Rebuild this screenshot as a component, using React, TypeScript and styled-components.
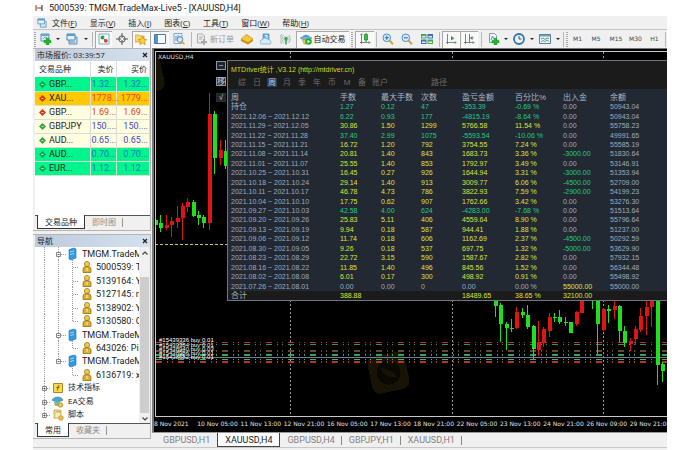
import React from "react";
import styled, { createGlobalStyle } from "styled-components";

const ui = '"Open Sans", "Noto Sans CJK SC", sans-serif';
const caption = 'Roboto, "Noto Sans CJK SC", sans-serif';
const figures = '"Liberation Sans", "Noto Sans CJK SC", sans-serif';

const Global = createGlobalStyle`
  *, *::before { box-sizing: border-box; }
  body { margin: 0; background: #fff; }
  button { font: inherit; color: inherit; background: none; border: 0; padding: 0; margin: 0; }
  h1, h2, ul { margin: 0; padding: 0; font: inherit; list-style: none; }
`;

const Window = styled.main`
  display: flex;
  flex-direction: column;
  height: 100vh;
  margin: 0 33px;
  overflow: hidden;
  background: #f0f0f0;
  font: 9px/12px ${ui};
  color: #222;
`;

const TitleBar = styled.header`
  display: flex;
  align-items: center;
  gap: 6px;
  height: 16px;
  padding-left: 2px;
  background: #fff;
  font-family: ${caption};
  h1 { white-space: nowrap; }
`;

const MenuBar = styled.nav`
  display: flex;
  align-items: center;
  gap: 13px;
  height: 13px;
  padding-left: 4px;
  font-size: 8px;
  svg { margin-right: -8px; }
  button { white-space: nowrap; }
`;

const Toolbar = styled.div`
  display: flex;
  align-items: center;
  height: 19px;
  border-top: 1px solid #c4c4c4;
  overflow: hidden;
`;

const Tool = styled.button<{ $w: number; $on?: boolean; $dim?: boolean }>`
  display: flex;
  align-items: center;
  justify-content: center;
  flex: 0 0 ${(p) => p.$w}px;
  height: 17px;
  font-size: 8px;
  white-space: nowrap;
  gap: 2px;
  color: ${(p) => (p.$dim ? "#9a9a9a" : "#222")};
  ${(p) => p.$on && "background:#f8f8f8;box-shadow:inset 1px 1px #a8a8a8, inset -1px -1px #fff;"}
`;

const Period = styled(Tool)`
  font: 6px/10px "DejaVu Sans", sans-serif;
  color: #444;
`;

const Caret = styled.button`
  flex: 0 0 6px;
  height: 17px;
  &::before {
    content: "";
    display: block;
    margin: 0 auto;
    width: 4px;
    border: 2px solid transparent;
    border-top-color: #222;
    border-bottom: 0;
  }
`;

const Sep = styled.i<{ $w: number }>`
  flex: 0 0 ${(p) => p.$w}px;
  height: 15px;
  background: linear-gradient(#b8b8b8, #b8b8b8) center / 1px 100% no-repeat;
`;

const Grip = styled.i<{ $w: number }>`
  flex: 0 0 ${(p) => p.$w}px;
  height: 15px;
  background: repeating-linear-gradient(#aaa 0 1px, transparent 1px 2px) center / 2px 100% no-repeat;
`;

const Body = styled.div`
  display: flex;
  flex: 1;
  min-height: 0;
`;

const Side = styled.aside`
  display: flex;
  flex-direction: column;
  flex: 0 0 118px;
  min-width: 0;
  gap: 3px;
  padding-bottom: 8px;
`;

const Dock = styled.section<{ $grow?: boolean }>`
  display: flex;
  flex-direction: column;
  min-width: 0;
  ${(p) => (p.$grow ? "flex:1;min-height:0;" : "flex:0 0 183px;")}
  border: solid #b4b4b4;
  border-width: 1px 1px 1px 0;
  padding-left: 2px;
`;

const DockTitle = styled.header`
  display: flex;
  align-items: center;
  justify-content: space-between;
  height: 12px;
  padding: 0 2px;
  background: linear-gradient(90deg, #bccbdc, #d6e1ee);
  font-size: 8px;
  h2 { white-space: nowrap; }
  svg { display: block; }
`;

const DockBody = styled.div`
  flex: 1;
  min-height: 0;
  display: flex;
  background: #fff;
  overflow: hidden;
`;

const DockTabs = styled.div`
  display: flex;
  height: 15px;
  padding-left: 2px;
  border-top: 1px solid #555;
  font-size: 8px;
`;

const DockTab = styled.button<{ $on?: boolean }>`
  padding: 0 7px;
  margin-top: -1px;
  height: 14px;
  white-space: nowrap;
  ${(p) =>
    p.$on
      ? "background:#fff;border:solid #333;border-width:0 1px 1px;color:#222;"
      : "color:#8c8c8c;background:linear-gradient(#999,#999) right / 1px 9px no-repeat;"}
`;

const Quotes = styled.table`
  width: 100%;
  align-self: flex-start;
  table-layout: fixed;
  border-collapse: collapse;
  th {
    height: 16px;
    padding: 0 2px 0 4px;
    font: 8px/12px ${ui};
    text-align: right;
    border-right: 1px solid #ddd;
    white-space: nowrap;
  }
  th:first-child { width: 55px; text-align: left; }
  td {
    height: 14px;
    padding: 0 1px;
    text-align: right;
    border: solid #d9dfd0;
    border-width: 0 1px 1px 0;
    white-space: nowrap;
    font-family: ${caption};
  }
  th:nth-child(2) { width: 26px; padding-left: 0; }
  td:first-child { text-align: left; color: #222; padding-left: 4px; }
  svg { vertical-align: -1px; margin-right: 3px; }
`;

const QuoteRow = styled.tr<{ $bg: string; $fg: string }>`
  background: ${(p) => p.$bg};
  color: ${(p) => p.$fg};
`;

const Tree = styled.ul`
  flex: 1;
  min-width: 0;
  display: flex;
  flex-direction: column;
  height: 175px;
  padding-left: 3px;
  overflow: hidden;
`;

const Branch = styled.li<{ $root?: boolean }>`
  flex: 1;
  min-height: 0;
  display: flex;
  align-items: center;
  gap: 4px;
  white-space: nowrap;
  font-size: ${(p) => (p.$root ? 8 : 9)}px;
  font-family: ${caption};
  svg { flex: none; }
`;

const Scroll = styled.div`
  flex: 0 0 11px;
  display: flex;
  flex-direction: column;
  align-items: center;
  justify-content: space-between;
  padding: 4px 0 2px;
  background: #f0f0f0;
`;

const Thumb = styled.div`
  width: 9px;
  height: 136px;
  margin-top: 18px;
  background: #cdcdcd;
`;

const Main = styled.section`
  flex: 1;
  min-width: 0;
  display: flex;
  flex-direction: column;
  padding-left: 1px;
`;

const Chart = styled.div`
  position: relative;
  flex: 1;
  min-height: 0;
  display: flex;
  flex-direction: column;
  border-left: 2px solid #777;
  border-top: 1px solid #777;
  background: #000;
  overflow: hidden;
`;

const Plot = styled.div`
  flex: 1;
  min-height: 0;
  margin: 2px 0 0 1px;
  border: solid #c8c8c8;
  border-width: 1px 0 1px 1px;
  overflow: hidden;
  svg { display: block; width: 100%; height: 100%; }
`;

const Dates = styled.div`
  display: grid;
  grid-template-columns: repeat(12, 1fr);
  height: 15px;
  margin-right: -6px;
  padding-top: 1px;
  color: #e4e4e4;
  font: 6px/11px "DejaVu Sans", sans-serif;
  span { white-space: nowrap; }
`;

const Symbol = styled.div`
  position: absolute;
  left: 4px;
  top: 3px;
  color: #ddd;
  font: 6px/9px "DejaVu Sans", sans-serif;
`;

const PanelKeys = styled.div`
  position: absolute;
  left: 62px;
  top: 12px;
  display: flex;
  flex-direction: column;
  gap: 7px;
`;

const Key = styled.button<{ $lit?: boolean }>`
  width: 10px;
  height: 9px;
  border: 1px solid ${(p) => (p.$lit ? "#8d96a8" : "#2a2a2a")};
  background: #20242c;
  color: #c8cedb;
  font: 8px/7px ${figures};
`;

const Report = styled.section`
  position: absolute;
  left: 73px;
  right: 0;
  top: 11px;
  border: solid #6f7682;
  border-width: 1px 0 1px 1px;
  background: #232933;
  color: #8f9cae;
  font: 7px/9px ${figures};
`;

const ReportHead = styled.header`
  height: 28px;
  padding: 4px 3px 0;
  background: #1b1b1b;
  h2 { color: #d6d624; white-space: nowrap; }
`;

const ReportTabs = styled.div`
  display: flex;
  gap: 5px;
  margin: 4px 0 0 6px;
  color: #6a6a6a;
  font-size: 8px;
`;

const ReportTab = styled.button<{ $on?: boolean; $far?: boolean }>`
  min-width: 10px;
  height: 9px;
  white-space: nowrap;
  margin-left: ${(p) => (p.$far ? 38 : 0)}px;
  ${(p) => p.$on && "background:#2c3950;color:#b9c9e0;"}
`;

const Figures = styled.table`
  width: 100%;
  height: 211px;
  table-layout: fixed;
  border-collapse: collapse;
  th, td {
    padding: 0;
    text-align: left;
    font-weight: normal;
    white-space: nowrap;
    line-height: 9px;
  }
  thead th { font-size: 8px; color: #a9b6c8; padding-top: 4px; }
  th:first-child, td:first-child { padding-left: 3px; }
  tbody tr:first-child td:first-child, tfoot td:first-child { font-size: 8px; }
  tfoot tr { background: #1b1b1b; }
`;

const Num = styled.td<{ $c: "y" | "g" | "n" }>`
  color: ${(p) => ({ y: "#dde23c", g: "#22cc80", n: "#9eabbd" })[p.$c]};
`;

const ChartTabs = styled.div`
  display: flex;
  height: 15px;
  padding-left: 4px;
  border-top: 1px solid #999;
  color: #808080;
  font-family: ${caption};
`;

const ChartTab = styled.button<{ $on?: boolean; $line?: boolean }>`
  padding: 0 7px;
  height: 14px;
  white-space: nowrap;
  ${(p) => p.$on && "background:#fff;border:solid #444;border-width:0 1px 1px;color:#222;"}
  ${(p) => p.$line && "background:linear-gradient(#888,#888) right / 1px 9px no-repeat;"}
`;

const Status = styled.footer`
  height: 3px;
  border-top: 1px solid #c8c8c8;
`;

const Svg = ({ s = 12, children }: { s?: number; children: React.ReactNode }) => (
  <svg width={s} height={s} viewBox="0 0 12 12" fill="none" aria-hidden="true">{children}</svg>
);

const Plus = () => <path d="M6.2 5.2h2.6v2.2H11v2.4H8.8V12H6.2V9.8H4V7.4h2.2z" fill="#19b82b" stroke="#0b8a1b" strokeWidth=".5" />;
const AddChart = () => <Svg><path d="M1 1h8v7H1z" fill="#dcebf7" stroke="#5b93bd" /><path d="M1 1h8v2H1z" fill="#69a5d2" /><path d="M3 6l2-2 2 1" stroke="#48a" strokeWidth=".7" /><Plus /></Svg>;
const Cascade = () => <Svg><path d="M3 4h8v7H3z" fill="#cfe4f4" stroke="#5a8fb8" /><path d="M1 1h8v6H1z" fill="#e4f1fb" stroke="#4f86b2" /><path d="M1 1h8v2H1z" fill="#5a9ccd" /><path d="M3 9h6" stroke="#5a8fb8" /></Svg>;
const Market = () => <Svg><path d="M1 1h10v10H1z" fill="#f4f9fd" stroke="#7eaacb" /><circle cx="4.500" cy="4.500" r="1.900" fill="#26a540" /><path d="M5 5l3 3" stroke="#26a540" /><circle cx="7.800" cy="7.800" r="1.900" fill="#dc4028" /></Svg>;
const Cross = () => <Svg><circle cx="6" cy="6" r="3.200" stroke="#555" strokeWidth="1" /><path d="M6 0v5M6 7v5M0 6h5M7 6h5" stroke="#555" strokeWidth="1" /></Svg>;
const StarFolder = () => <Svg><path d="M0 2h4l1 1h4v6H0z" fill="#f7d774" stroke="#c59a2c" strokeWidth=".7" /><path d="M7.500 3.500l1.300 2.700 3 .4-2.200 2 .6 3-2.700-1.500-2.700 1.500.6-3-2.200-2 3-.4z" fill="#ffd62e" stroke="#bb8a14" strokeWidth=".7" /></Svg>;
const PanelIcon = () => <Svg><path d="M.5 1.500h11v9H.5z" fill="#fff" stroke="#3f7bb0" /><path d="M1 2h3v8H1z" fill="#5593cc" /><path d="M5.500 4h5M5.500 6h5M5.500 8h5" stroke="#d7e3ee" strokeWidth=".6" /></Svg>;
const Tester = () => <Svg><path d="M1 .5h8v10H1z" fill="#e6f1fa" stroke="#83a9c6" /><path d="M3 8V3M5 7V2M7 6V3" stroke="#5b93bd" /><circle cx="7" cy="6.500" r="2.800" fill="#d6ebfb" fillOpacity=".8" stroke="#5d8bb0" /><path d="M9 8.500l2.500 2.800" stroke="#d9a22b" strokeWidth="1.600" /></Svg>;
const Order = () => <Svg><path d="M1.500 1h5l2 2v7h-7z" fill="#eee" stroke="#aaa" /><path d="M3 4h4M3 6h3" stroke="#aaa" /><path d="M7 6h2v2h2v2H9v2H7v-2H5V8h2z" fill="#aaa" /></Svg>;
const Gold = () => <Svg><path d="M0 6l6-4.500L12 6v2L7 11.500 0 8z" fill="#c98a14" /><path d="M0 6l5-4.500 7 4.500-5 3.500z" fill="#f6c83a" stroke="#c48a18" strokeWidth=".5" /></Svg>;
const Cloud = () => <Svg><path d="M3 1h6v6H3z" fill="#6fb1e4" stroke="#3b84bd" strokeWidth=".7" /><path d="M5 2.500h2v3" stroke="#fff" /><path d="M2 11a2 2 0 010-4 3 3 0 015-1 2.500 2.500 0 013 2 1.600 1.600 0 010 3z" fill="#dcecf8" stroke="#6e9fc6" strokeWidth=".7" /></Svg>;
const Signal = () => <Svg><path d="M3.500 2a5.500 5.500 0 000 8M8.500 2a5.500 5.500 0 010 8M1.800 1a7 7 0 000 10" stroke="#a2b7b0" /><circle cx="6" cy="6" r="3" fill="#c9d6d2" /><circle cx="6" cy="5.500" r="1.600" fill="#3e9a55" /><path d="M6 7v4.500" stroke="#39a84d" strokeWidth="1.600" /></Svg>;
const Expert = () => <Svg><path d="M2 5.500c0-5 8-5 8 0z" fill="#4f9bd2" /><path d="M0 5c3-2 9-2 12 0-3 2-9 2-12 0z" fill="#77b9e4" stroke="#3880b3" strokeWidth=".5" /><path d="M2 6.500h6L6 11H4z" fill="#e8c05a" stroke="#b98c22" strokeWidth=".5" /><circle cx="8.500" cy="8.500" r="3.300" fill="#1fae35" /><path d="M7.500 6.700v3.600l2.800-1.800z" fill="#fff" /></Svg>;
const Candle = () => <Svg><path d="M2.500 1v10M1 9.500h10M1.300 2.200L2.500.8l1.200 1.400M9.800 8.300L11 9.500l-1.200 1.300" stroke="#666" strokeWidth=".8" /><path d="M7 0v9" stroke="#118a22" /><path d="M5.500 1.500h3v5.500h-3z" fill="#2fc244" stroke="#118a22" strokeWidth=".7" /></Svg>;
const Zoom = ({ plus }: { plus?: boolean }) => <Svg><path d="M7.500 7.500l3.500 3.700" stroke="#d3a52e" strokeWidth="2" /><circle cx="4.800" cy="4.800" r="3.800" fill="#d5ebfb" stroke="#4f8fc7" /><path d={plus ? "M2.800 4.800h4M4.800 2.800v4" : "M2.800 4.800h4"} stroke="#2c74b5" strokeWidth="1.100" /></Svg>;
const Tile = () => <Svg><path d="M0 1h5.500v4.500H0zM6.500 6.500H12V11H6.500z" fill="#4da650" /><path d="M6.500 1H12v4.500H6.500zM0 6.500h5.500V11H0z" fill="#3974b8" /><path d="M1 3h3.500v1.500H1zM7.500 3H11v1.500H7.500zM1 8.500h3.500V10H1zM7.500 8.500H11V10H7.500z" fill="#e2eefa" /></Svg>;
const Shift = ({ two }: { two?: boolean }) => <Svg><path d="M2.500 1v10M1 9.500h10M9.800 8.300L11 9.500l-1.200 1.300" stroke="#666" strokeWidth=".8" />{two ? <><path d="M6.500 1v8.500M10.500 5H7.500" stroke="#666" strokeWidth=".9" /><path d="M9.500 3v4L7 5z" fill="#39915a" /></> : <path d="M6 3v4.500L9.500 5.200z" fill="#25a53d" />}</Svg>;
const Indicators = () => <Svg><path d="M1.500.5h5l2 2v7h-7z" fill="#eef5fa" stroke="#8b9aa6" /><path d="M3 7l1.500-4L6 6" stroke="#3b7fb5" strokeWidth=".8" /><Plus /></Svg>;
const Clock = () => <Svg><circle cx="6" cy="6" r="5" fill="#e9f4fc" stroke="#2e74b8" strokeWidth="1.800" /><path d="M6 3v3h2.500" stroke="#345" strokeWidth=".9" /></Svg>;
const Template = () => <Svg><path d="M.5 1.500h11v9H.5z" fill="#eaf4fb" stroke="#5b7f9c" /><path d="M1 2h10v1.500H1z" fill="#6ba2cb" /><path d="M2 6l2-1 2 1.500L8 5l2 .5M2 9l2-1.500 2 1 2-1.500 2 1.500" stroke="#3c8a5e" strokeWidth=".8" /></Svg>;
const CloseX = () => <svg width="6" height="6" viewBox="0 0 6 6"><path d="M1 1l4 4M5 1L1 5" stroke="#222" strokeWidth="1.300" /></svg>;
const Chevron = ({ up }: { up?: boolean }) => <svg width="6" height="4" viewBox="0 0 6 4"><path d={up ? "M.5 3.500L3 1l2.500 2.500" : "M.5.5L3 3 5.500.5"} fill="none" stroke="#444" strokeWidth="1.200" /></svg>;

const Arrow = ({ c }: { c: string }) => (
  <svg width="7" height="7" viewBox="0 0 7 7" aria-hidden="true"><path d="M3.500 0L7 3.500 3.500 7 0 3.500z" fill={c} /><path d="M2.500 3.500h2" stroke="#dff2d8" strokeWidth=".9" /></svg>
);

const quotes = [
  ["GBP...", "1.32...", "1.32...", "#00f58c", "#1676c8", "#16a34a"],
  ["XAU...", "1778...", "1779...", "#ffc800", "#e8461e", "#d8321e"],
  ["GBP...", "1.69...", "1.69...", "#fffee0", "#e0402c", "#d8321e"],
  ["GBPJPY", "150....", "150....", "#fffee0", "#4646c8", "#3aa03c"],
  ["AUD...", "0.65...", "0.65...", "#fffee0", "#4646c8", "#3aa03c"],
  ["AUD...", "0.70...", "0.70...", "#00f58c", "#1676c8", "#16a34a"],
  ["EUR...", "1.12...", "1.12...", "#00f58c", "#1676c8", "#16a34a"],
];

const tree: [string, string][] = [
  ["server", "TMGM.TradeM"], ["user", "5000539: T"], ["user", "5139164: Y"], ["user", "5127145: n"],
  ["user", "5138902: Y"], ["last", "5130580: C"], ["server", "TMGM.TradeM"], ["last", "643026: Pir"],
  ["end", "TMGM.TradeM"], ["lastend", "6136719: x"], ["f", "技术指标"], ["ea", "EA交易"], ["script", "脚本"],
];

const TreeIcon = ({ kind }: { kind: string }) => {
  const line = { stroke: "#999", strokeWidth: 1, strokeDasharray: "1 1" };
  if (kind === "f" || kind === "ea" || kind === "script")
    return (
      <svg width="26" height="14" viewBox="0 0 26 14" fill="none" aria-hidden="true">
        <path d={kind === "script" ? "M6.500 0v7M9 7.500h4" : "M6.500 0v14M9 7.500h4"} {...line} />
        <path d="M4.500 5.500h4v4h-4z" fill="#fff" stroke="#888" /><path d="M5.500 7.500h2M6.500 6.500v2" stroke="#345" strokeWidth=".8" />
        {kind === "f" && <><path d="M15.500 2.500h9v9h-9z" fill="#fbd947" stroke="#a9842a" /><path d="M21.500 4.500q-1.500-.5-1.500 1.500l-.6 3.500M18.500 6.500h3" stroke="#555" strokeWidth=".9" /></>}
        {kind === "ea" && <g transform="translate(14 1)"><path d="M0 4c3-4 9-4 11 0-3 2-8 2-11 0z" fill="#4fa4cf" stroke="#2e7ba5" strokeWidth=".6" /><path d="M2 6h6l-1 4H3z" fill="#7dbb9a" /><circle cx="8.500" cy="9" r="2.300" fill="#edc04a" stroke="#a87c1c" strokeWidth=".6" /></g>}
        {kind === "script" && <g transform="translate(15 1)"><path d="M1 1h6q1.500 0 1 2H3v6H1z" fill="#f7e39a" stroke="#b8962f" strokeWidth=".7" /><path d="M3 3h5v6H2" fill="#fbeeb8" stroke="#b8962f" strokeWidth=".7" /><circle cx="8" cy="9" r="2.300" fill="#edc04a" stroke="#a87c1c" strokeWidth=".6" /></g>}
      </svg>
    );
  const server = kind === "server" || kind === "end";
  return (
    <svg width={server ? 40 : 54} height="14" viewBox={server ? "0 0 40 14" : "0 0 54 14"} fill="none" aria-hidden="true">
      <path d="M6.500 0v14" {...line} />
      {server ? (
        <>
          <path d={kind === "end" ? "M20.500 0v7M23 7.500h5" : "M20.500 0v14M23 7.500h5"} {...line} />
          <path d="M18.500 5.500h4v4h-4z" fill="#fff" stroke="#888" /><path d="M19.500 7.500h2" stroke="#345" strokeWidth=".8" />
          <path d="M31 2.500l5-1.500 2 1v9l-5 2-2-1z" fill="#2f9be0" stroke="#1d74b5" strokeWidth=".6" /><path d="M32 5l4-1M32 7.500l4-1" stroke="#bfe4fb" strokeWidth=".8" />
        </>
      ) : (
        <>
          {kind !== "lastend" && <path d="M20.500 0v14" {...line} />}
          <path d={kind === "user" ? "M34.500 0v14M35 7.500h6" : "M34.500 0v7M35 7.500h6"} {...line} />
          <circle cx="49" cy="4" r="2.600" fill="#edc94c" stroke="#9f7c1e" strokeWidth=".8" />
          <path d="M45 12.500V9q0-2.500 4-2.500T53 9v3.500z" fill="#dcae2b" stroke="#94701a" strokeWidth=".8" /><path d="M49 8v3" stroke="#fff3b5" />
        </>
      )}
    </svg>
  );
};

const rows = `持仓|1.27|0.12|47|-353.39|-0.69 %|0.00|50943.04
2021.12.06 ~ 2021.12.12|6.22|0.93|177|-4815.19|-8.64 %|0.00|50943.04
2021.11.29 ~ 2021.12.05|30.86|1.50|1299|5766.58|11.54 %|0.00|55758.23
2021.11.22 ~ 2021.11.28|37.40|2.99|1075|-5593.54|-10.06 %|0.00|49991.65
2021.11.15 ~ 2021.11.21|16.72|1.20|792|3754.55|7.24 %|0.00|55585.19
2021.11.08 ~ 2021.11.14|20.81|1.40|843|1683.73|3.36 %|-3000.00|51830.64
2021.11.01 ~ 2021.11.07|25.55|1.40|853|1792.97|3.49 %|0.00|53146.91
2021.10.25 ~ 2021.10.31|16.45|0.27|926|1644.94|3.31 %|-3000.00|51353.94
2021.10.18 ~ 2021.10.24|29.14|1.40|913|3009.77|6.06 %|-4500.00|52709.00
2021.10.11 ~ 2021.10.17|46.78|4.73|786|3822.93|7.59 %|-2900.00|54199.23
2021.10.04 ~ 2021.10.10|17.75|0.62|907|1762.66|3.42 %|0.00|53276.30
2021.09.27 ~ 2021.10.03|42.58|4.00|624|-4283.00|-7.68 %|0.00|51513.64
2021.09.20 ~ 2021.09.26|25.83|5.11|406|4559.64|8.90 %|0.00|55796.64
2021.09.13 ~ 2021.09.19|9.94|0.18|587|944.41|1.88 %|0.00|51237.00
2021.09.06 ~ 2021.09.12|11.74|0.18|606|1162.69|2.37 %|-4500.00|50292.59
2021.08.30 ~ 2021.09.05|9.26|0.18|537|697.75|1.32 %|-5000.00|53629.90
2021.08.23 ~ 2021.08.29|22.72|3.15|590|1587.67|2.82 %|0.00|57932.15
2021.08.16 ~ 2021.08.22|11.85|1.40|496|845.56|1.52 %|0.00|56344.48
2021.08.02 ~ 2021.08.08|6.01|0.17|300|498.92|0.91 %|0.00|55498.92
2021.07.26 ~ 2021.08.01|0.00|0.00|0|0.00|0.00 %|55000.00|55000.00`.split("\n").map((r) => r.split("|"));

const tone = (r: string[], i: number): "y" | "g" | "n" => {
  if (i === 0 || i === 7) return "n";
  if (i === 6) return r[6] === "0.00" ? "n" : r[6][0] === "-" ? "g" : "y";
  return r[4] === "0.00" ? "n" : r[4][0] === "-" ? "g" : "y";
};

// [x, body top, body bottom, wick top, wick bottom, rising]
const candles: number[][] = [
  [156, 220, 225, 218, 227, 0], [161, 223, 228, 215, 232, 0], [167, 225, 228, 215, 230, 1], [172, 221, 225, 217, 237, 1],
  [178, 218, 222, 206, 228, 1], [183, 206, 218, 203, 240, 1], [188, 202, 207, 198, 212, 1], [194, 202, 216, 200, 217, 0],
  [199, 215, 218, 211, 225, 0], [204, 217, 223, 215, 228, 0], [210, 114, 223, 93, 230, 1], [215, 114, 158, 111, 174, 0],
  [221, 150, 158, 140, 165, 1], [226, 151, 166, 140, 169, 0],
  [496, 296, 306, 296, 317, 0], [501, 305, 324, 303, 342, 0], [507, 324, 328, 322, 350, 0], [512, 328, 329, 319, 332, 0],
  [517, 312, 328, 307, 329, 1], [523, 312, 315, 308, 318, 0], [528, 315, 327, 305, 329, 0], [534, 326, 349, 325, 359, 0],
  [539, 342, 350, 321, 356, 1], [544, 329, 343, 327, 347, 1], [550, 317, 331, 313, 337, 1], [555, 317, 318, 313, 322, 0],
  [560, 317, 322, 310, 324, 0], [566, 322, 323, 317, 326, 0], [571, 322, 333, 322, 333, 0], [577, 312, 324, 311, 326, 1],
  [582, 296, 313, 296, 313, 1], [593, 296, 297, 296, 309, 0], [598, 296, 324, 296, 354, 0], [604, 309, 330, 308, 331, 1],
  [609, 309, 311, 305, 323, 0], [615, 306, 310, 296, 319, 1], [620, 306, 331, 305, 342, 0], [625, 331, 343, 326, 347, 0],
  [631, 341, 344, 338, 351, 1], [636, 329, 339, 326, 345, 1], [641, 316, 330, 308, 332, 1], [647, 307, 316, 296, 335, 1],
  [652, 296, 307, 296, 327, 1], [658, 296, 365, 296, 385, 0], [663, 364, 371, 362, 382, 0],
];
const levels: [number, string][] = [[342, "#b3362e"], [344, "#3f8f4a"], [350, "#2f6b38"], [351, "#963029"], [354, "#3aa04a"], [355, "#3aa04a"], [359, "#4fae56"], [361, "#a8392e"], [362, "#b3362e"]];
const orders = ["#15439336 buy 0.01", "#15439384 buy 0.01", "#15438940 buy 0.03", "#15438986 buy 0.01", "#15438682 buy 0.01"];
const orderY = [342, 347, 351, 355, 359];

const Mark = ({ x, y }: { x: number; y: number }) => (
  <g transform={`translate(${x} ${y}) rotate(-12)`} fill="#171305"><rect width="38" height="38" rx="8" /><circle cx="19" cy="19" r="12" fill="#0a0802" /><path d="M12 13q9 2 15 12q-12 0-15-12z" /></g>
);

const Drawing = () => (
  <svg aria-hidden="true">
    <g transform="translate(-157 -52)" shapeRendering="crispEdges">
      <Mark x={122} y={60} />
      <Mark x={367} y={358} />
      {[291, 453, 604].map((x) => <path key={x} d={`M${x + 0.5} 52V417`} stroke="#9a9a9a" strokeDasharray="2 2" />)}
      <path d="M156 244.500H1200" stroke="#c9c27e" strokeDasharray="3 2" />
      {levels.map(([y, c]) => <path key={y} d={`M157 ${y + 0.5}H1200`} stroke={c} strokeDasharray="6 5 1 4 1 5" />)}
      <path d="M157 357.500H1200" stroke="#6d7f9c" />
      {candles.map(([x, a, b, t, w, up]) => (
        <g key={x} fill={up ? "#e01414" : "#1fe01f"}><rect x={x} y={t} width="1" height={w - t} /><rect x={x - 1} y={a} width="4" height={b - a} /></g>
      ))}
    </g>
    <g transform="translate(-157 -52)" fill="#fff" fontFamily="Liberation Sans" fontSize="6">
      {orders.map((o, i) => <text key={o} x="160" y={orderY[i]}>{o}</text>)}
    </g>
  </svg>
);

const dates = ["8 Nov 2021", "10 Nov 05:00", "11 Nov 13:00", "12 Nov 21:00", "16 Nov 05:00", "17 Nov 13:00", "18 Nov 21:00", "22 Nov 05:00", "23 Nov 13:00", "24 Nov 21:00", "26 Nov 09:00", "29 Nov 21:00"];
const menus = [["文件", "F"], ["显示", "V"], ["插入", "I"], ["图表", "C"], ["工具", "T"], ["窗口", "W"], ["帮助", "H"]];
const heads = ["周", "手数", "最大手数", "次数", "盈亏金额", "百分比%", "出入金", "余额"];
const totals = ["合计", "388.88", "", "", "18489.65", "38.65 %", "32100.00", ""];
const colWidths = [112, 41, 40, 41, 53, 48, 47];

export default function App() {
  return (
    <>
      <Global />
      <Window>
        <TitleBar>
          <svg width="8" height="6" viewBox="0 0 8 6" aria-hidden="true"><path d="M1 0v6M1 3h3" stroke="#c24c44" strokeWidth="1.200" /><path d="M7 0v6M4 3h3" stroke="#444" strokeWidth="1.200" /></svg>
          <h1>5000539: TMGM.TradeMax-Live5 - [XAUUSD,H4]</h1>
        </TitleBar>
        <MenuBar aria-label="菜单">
          <Svg s={10}><path d="M4 4h7v7H4z" fill="#d4e8f7" stroke="#5a97c6" /><path d="M1 1h8v6H1z" fill="#e8f3fb" stroke="#5a97c6" /><path d="M1 1h8v2H1z" fill="#5a9fd4" /></Svg>
          {menus.map(([n, k]) => <button key={k}>{n}(<u>{k}</u>)</button>)}
        </MenuBar>
        <Toolbar role="toolbar">
          <Grip $w={4} />
          <Tool $w={18} aria-label="新图表"><AddChart /></Tool><Caret aria-label="新图表列表" />
          <Tool $w={22} aria-label="模板组"><Cascade /></Tool><Caret aria-label="模板组列表" />
          <Sep $w={6} />
          <Tool $w={17} $on aria-label="市场报价"><Market /></Tool>
          <Tool $w={20} aria-label="数据窗口"><Cross /></Tool>
          <Tool $w={18} $on aria-label="导航"><StarFolder /></Tool>
          <Tool $w={19} $on aria-label="终端"><PanelIcon /></Tool>
          <Tool $w={20} aria-label="策略测试"><Tester /></Tool>
          <Sep $w={4} />
          <Tool $w={44} $dim><Order />新订单</Tool>
          <Tool $w={19} aria-label="编辑器"><Gold /></Tool>
          <Tool $w={20} aria-label="云"><Cloud /></Tool>
          <Tool $w={20} aria-label="信号"><Signal /></Tool>
          <Tool $w={53} $on><Expert />自动交易</Tool>
          <Grip $w={6} />
          <Tool $w={19} $on aria-label="蜡烛图"><Candle /></Tool>
          <Sep $w={5} />
          <Tool $w={18} aria-label="放大"><Zoom plus /></Tool>
          <Tool $w={20} aria-label="缩小"><Zoom /></Tool>
          <Tool $w={20} aria-label="平铺"><Tile /></Tool>
          <Sep $w={5} />
          <Tool $w={18} $on aria-label="自动滚动"><Shift /></Tool>
          <Tool $w={18} $on aria-label="图表平移"><Shift two /></Tool>
          <Sep $w={6} />
          <Tool $w={19} aria-label="指标"><Indicators /></Tool><Caret aria-label="指标列表" />
          <Tool $w={20} aria-label="周期"><Clock /></Tool><Caret aria-label="周期列表" />
          <Tool $w={20} aria-label="模板"><Template /></Tool><Caret aria-label="模板列表" />
          <Sep $w={4} /><Grip $w={4} />
          <Period $w={17}>M1</Period><Period $w={20}>M5</Period><Period $w={20}>M15</Period><Period $w={19}>M30</Period><Period $w={19}>H1</Period>
          <Sep $w={3} />
        </Toolbar>
        <Body>
          <Side>
            <Dock>
              <DockTitle><h2>市场报价: 03:39:57</h2><button aria-label="关闭"><CloseX /></button></DockTitle>
              <DockBody>
                <Quotes>
                  <thead><tr><th>交易品种</th><th>卖价</th><th>买价</th></tr></thead>
                  <tbody>
                    {quotes.map(([n, s, b, bg, fg, ic], i) => (
                      <QuoteRow key={i} $bg={bg} $fg={fg}><td><Arrow c={ic} />{n}</td><td>{s}</td><td>{b}</td></QuoteRow>
                    ))}
                  </tbody>
                </Quotes>
              </DockBody>
              <DockTabs><DockTab $on>交易品种</DockTab><DockTab>即时图</DockTab></DockTabs>
            </Dock>
            <Dock $grow>
              <DockTitle><h2>导航</h2><button aria-label="关闭"><CloseX /></button></DockTitle>
              <DockBody>
                <Tree>
                  {tree.map(([k, t], i) => <Branch key={i} $root={i > 9}><TreeIcon kind={k} />{t}</Branch>)}
                </Tree>
                <Scroll><Chevron up /><Thumb /><Chevron /></Scroll>
              </DockBody>
              <DockTabs><DockTab $on>常用</DockTab><DockTab>收藏夹</DockTab></DockTabs>
            </Dock>
          </Side>
          <Main>
            <Chart>
              <Plot><Drawing /></Plot>
              <Dates>{dates.map((d) => <span key={d}>{d}</span>)}</Dates>
              <Symbol>XAUUSD,H4</Symbol>
              <PanelKeys><Key $lit>−</Key><Key $lit>移</Key><Key>√</Key></PanelKeys>
              <Report>
                <ReportHead>
                  <h2>MTDriver统计 ,V3.12 (http://mtdriver.cn)</h2>
                  <ReportTabs>
                    {["综", "日", "周", "月", "季", "年", "币", "M", "备", "账户", "路径"].map((t) => (
                      <ReportTab key={t} $on={t === "周"} $far={t === "路径"}>{t}</ReportTab>
                    ))}
                  </ReportTabs>
                </ReportHead>
                <Figures>
                  <colgroup>{colWidths.map((w, i) => <col key={i} width={w} />)}<col /></colgroup>
                  <thead><tr>{heads.map((h) => <th key={h}>{h}</th>)}</tr></thead>
                  <tbody>{rows.map((r) => <tr key={r[0]}>{r.map((c, i) => <Num key={i} $c={tone(r, i)}>{c}</Num>)}</tr>)}</tbody>
                  <tfoot><tr>{totals.map((c, i) => <Num key={i} $c={i ? "y" : "n"}>{c}</Num>)}</tr></tfoot>
                </Figures>
              </Report>
            </Chart>
            <ChartTabs>
              <ChartTab>GBPUSD,H1</ChartTab><ChartTab $on>XAUUSD,H4</ChartTab><ChartTab $line>GBPUSD,H4</ChartTab><ChartTab $line>GBPJPY,H1</ChartTab><ChartTab $line>XAUUSD,H1</ChartTab>
            </ChartTabs>
          </Main>
        </Body>
        <Status />
      </Window>
    </>
  );
}
